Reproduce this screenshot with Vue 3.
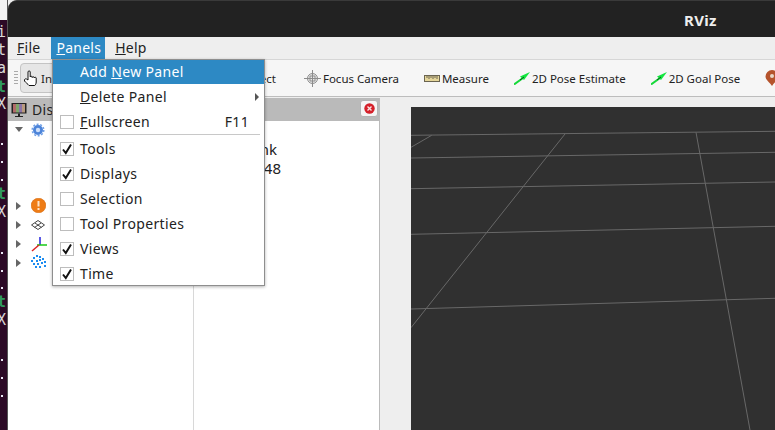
<script setup>
const tools = [
  { label: 'Focus Camera', icon: 'focus' },
  { label: 'Measure', icon: 'ruler' },
  { label: '2D Pose Estimate', icon: 'arrow' },
  { label: '2D Goal Pose', icon: 'arrow' },
  { label: '', icon: 'pin' },
]
const menu = [
  { label: 'Tools', checked: true },
  { label: 'Displays', checked: true },
  { label: 'Selection', checked: false },
  { label: 'Tool Properties', checked: false },
  { label: 'Views', checked: true },
  { label: 'Time', checked: true },
]
const cloud = [[5,0],[8,1],[2,2],[11,3],[0,5],[5,5],[8,4],[2,8],[6,8],[10,7],[13,6],[4,11],[8,11],[13,10]]
const termDots = [143, 161, 179, 252, 270, 287, 359, 377, 395]
const termChars = [
  { c: 'i', y: 24, cl: '#d8d8d8' }, { c: 't', y: 42, cl: '#d8d8d8' }, { c: 'a', y: 60, cl: '#d8d8d8' },
  { c: 't', y: 79, cl: '#2f9a5e', b: true }, { c: 'X', y: 96, cl: '#d8d8d8' }, { c: 't', y: 186, cl: '#2f9a5e', b: true },
  { c: 'X', y: 204, cl: '#d8d8d8' }, { c: 't', y: 294, cl: '#2f9a5e', b: true }, { c: 'X', y: 312, cl: '#d8d8d8' },
]
</script>

<template>
  <div class="screen">
    <div class="term">
      <span v-for="(t, i) in termChars" :key="i" class="tchar" :class="{ bold: t.b }" :style="{ top: t.y + 'px', color: t.cl }">{{ t.c }}</span>
      <i v-for="d in termDots" :key="d" class="tdot" :style="{ top: d + 'px' }"></i>
    </div>
    <div class="window">
      <header class="title">RViz</header>
      <nav class="menubar">
        <span class="mi first"><u>F</u>ile</span>
        <span class="mi active"><u>P</u>anels</span>
        <span class="mi"><u>H</u>elp</span>
      </nav>
      <div class="toolbar">
        <div class="grip"></div>
        <div class="interact">
          <svg width="17" height="16" viewBox="0 0 17 16"><path d="M1.500 10c0-1 1-1.500 2-1L5 10V2c0-1.500 2.200-1.500 2.200 0V7c0-1 2-1 2 0v.5c0-1 2-1 2 0V8c0-1 2-1 2 0v4c0 2-1 3-1.500 3.500H6C5 14 2.500 12.500 1.500 11z" fill="#fff" stroke="#111" stroke-width="1"/></svg>
          <span>Interact</span>
        </div>
        <div class="spacer"></div>
        <span class="tool tail">Select</span>
        <div v-for="t in tools" :key="t.label + t.icon" class="tool">
          <svg v-if="t.icon === 'focus'" width="17" height="17" viewBox="0 0 17 17" fill="none" stroke="#8c8c8c"><circle cx="8.500" cy="8.500" r="5" fill="#e8e8e8"/><path d="M8.500 0v17M0 8.500h17M6 6h5v5H6z"/></svg>
          <svg v-else-if="t.icon === 'ruler'" width="16" height="7" viewBox="0 0 16 7"><rect x=".5" y=".5" width="15" height="6" fill="#e5d69a" stroke="#6a6450"/><path d="M3 1v2M5 1v3M7 1v2M9 1v3M11 1v2M13 1v3" stroke="#6a6450"/></svg>
          <svg v-else-if="t.icon === 'arrow'" width="16" height="13" viewBox="0 0 16 13"><path d="M0 12.500L9 6" stroke="#16d93a" stroke-width="2"/><path d="M6 4.500L16 0l-6 8z" fill="#12e63e"/><path d="M6 8l4-3" stroke="#0a5a1c"/></svg>
          <svg v-else width="14" height="16" viewBox="0 0 14 16"><path d="M7 0a6.500 6.500 0 016.500 6.500C13.500 10 9 12.500 7 16 5 12.500.5 10 .5 6.500A6.500 6.500 0 017 0z" fill="#b5532c"/><circle cx="7" cy="6" r="2" fill="#e8d8c8"/></svg>
          <span v-if="t.label">{{ t.label }}</span>
        </div>
      </div>
      <main class="body">
        <section class="dock displays">
          <div class="dock-head">
            <svg width="16" height="16" viewBox="0 0 16 16"><rect x=".5" y="1" width="15" height="10.500" fill="#222"/><rect x="2" y="2" width="3" height="8.500" fill="#b06a6a"/><rect x="5" y="2" width="3" height="8.500" fill="#7ea66c"/><rect x="8" y="2" width="3" height="8.500" fill="#8a74a6"/><rect x="11" y="2" width="3" height="8.500" fill="#b89a7e"/><path d="M7 11.500h2V14h3v1H4v-1h3z" fill="#222"/></svg>
            <span>Displays</span>
          </div>
          <div class="tree">
            <div class="row"><b class="arr down"></b>
              <svg width="14" height="14" viewBox="0 0 14 14"><circle cx="7" cy="7" r="5" fill="#4d84d9"/><circle cx="7" cy="7" r="5.800" fill="none" stroke="#6f9fe6" stroke-width="1.500" stroke-dasharray="2 1.600"/><circle cx="7" cy="7" r="2.200" fill="#cfe0fa"/></svg>
            </div>
            <div class="gap"></div>
            <div class="row"><b class="arr"></b>
              <svg width="15" height="15" viewBox="0 0 15 15"><circle cx="7.500" cy="7.500" r="7.300" fill="#ee7c16" stroke="#d9690c" stroke-width=".6"/><rect x="6.500" y="3" width="2" height="5.500" fill="#fde3c8"/><rect x="6.500" y="10" width="2" height="2" fill="#fde3c8"/></svg>
            </div>
            <div class="row"><b class="arr"></b>
              <svg width="14" height="10" viewBox="0 0 14 10" fill="none" stroke="#444"><path d="M7 .5l6.500 4.500L7 9.500.5 5zM4 3l6.500 4.500M10 3L3.500 7.500"/></svg>
            </div>
            <div class="row"><b class="arr"></b>
              <svg width="16" height="16" viewBox="0 0 16 16" fill="none" stroke-width="1.500"><path d="M9 1v8" stroke="#2222dd"/><path d="M6 9h10" stroke="#18c818"/><path d="M8 9L1 15" stroke="#dd2222"/></svg>
            </div>
            <div class="row"><b class="arr"></b>
              <svg width="15" height="15" viewBox="0 0 15 15" fill="#1c8cf0"><rect v-for="(c, i) in cloud" :key="i" :x="c[0]" :y="c[1]" width="2" height="2"/></svg>
            </div>
          </div>
          <div class="col-line"></div>
          <div class="val val1">nk</div>
          <div class="val val2">48</div>
          <div class="head-close">
            <svg width="11" height="11" viewBox="0 0 11 11"><circle cx="5.500" cy="5.500" r="5.200" fill="#d5202a"/><path d="M3.500 3.500l4 4M7.500 3.500l-4 4" stroke="#fbe4e4" stroke-width="1.400"/></svg>
          </div>
        </section>
        <section class="view">
          <svg class="grid" width="364" height="323" viewBox="411 107 364 323" fill="none" stroke="#686868">
            <path d="M411 135.300L775 131.300M411 158L775 152.300M411 188.700L775 182M411 234.300L775 226.300M411 309L775 298.300"/>
            <path d="M411 147.300L431.700 135.300M411 327.700L565 134M696 132.300L750 430"/>
          </svg>
        </section>
      </main>
    </div>

    <div class="popup">
      <div class="pi hot"><span class="lbl">Add <u>N</u>ew Panel</span></div>
      <div class="pi"><span class="lbl"><u>D</u>elete Panel</span><em class="sub"></em></div>
      <div class="pi"><span class="box"></span><span class="lbl"><u>F</u>ullscreen</span><span class="key">F11</span></div>
      <div class="sep"></div>
      <div v-for="m in menu" :key="m.label" class="pi">
        <span class="box">
          <svg v-if="m.checked" width="12" height="12" viewBox="0 0 12 12" fill="none" stroke="#111" stroke-width="2"><path d="M2 6.500L4.800 10 10 1.500"/></svg>
        </span>
        <span class="lbl">{{ m.label }}</span>
      </div>
    </div>
  </div>
</template>

<style scoped>
.screen { position: relative; width: 775px; height: 430px; overflow: hidden; background: #f2f2f2; font-family: "Noto Sans", "Open Sans", sans-serif; font-size: 13px; color: #222; }
.term { position: absolute; left: 0; top: 20px; bottom: 0; width: 8px; background: #2c0a26; overflow: hidden; }
.tchar { position: absolute; left: -3px; margin-top: -20px; font: 400 15px/16px "DejaVu Sans Mono", monospace; }
.tchar.bold { font-weight: 700; }
.tdot { position: absolute; left: 1px; margin-top: -20px; width: 2px; height: 2px; background: #e8e8f4; }
.window { position: absolute; left: 7px; top: 0; right: 0; bottom: 0; display: flex; flex-direction: column; background: #eee; border-left: 1px solid #555; }
.title { height: 37px; flex: none; background: #222; color: #eee; font-weight: 700; font-size: 15px; letter-spacing: .3px; line-height: 38px; padding-left: 676px; border-top: 1px solid #3a3a3a; box-sizing: border-box; border-radius: 9px 0 0 0; }
.menubar { height: 22px; flex: none; display: flex; background: #eee; padding-left: 9px; font-size: 14px; letter-spacing: .25px; line-height: 22px; }
.mi { color: #222; }
.mi.first { margin-right: 11px; }
.mi.active { background: #2d89c4; color: #fff; padding: 0 4px 0 5px; margin-right: 10px; }
.toolbar { height: 38px; flex: none; display: flex; align-items: center; background: #f6f6f6; border-top: 1px solid #d6d6d6; border-bottom: 1px solid #bdbdbd; box-sizing: border-box; font-size: 11.5px; }
.grip { width: 4px; height: 16px; flex: none; margin-left: 6px; background: radial-gradient(#aaa 40%, transparent 45%) 0 0 / 2px 3px; }
.interact { display: flex; align-items: center; gap: 1px; flex: none; margin-left: 2px; width: 70px; height: 30px; box-sizing: border-box; border: 1px solid #c4c4c4; border-radius: 4px; background: #e6e6e6; padding-left: 2px; overflow: hidden; white-space: nowrap; }
.spacer { flex: none; width: 154px; }
.tool { display: flex; align-items: center; gap: 2px; flex: none; white-space: nowrap; margin-right: 25px; }
.tool.tail { margin-right: 28px; }
.body { flex: 1; display: flex; min-height: 0; padding-top: 1px; }
.dock { position: relative; width: 372px; flex: none; background: #fff; border-right: 1px solid #bbb; box-sizing: border-box; }
.dock-head { height: 23px; background: #bababa; display: flex; align-items: center; gap: 5px; padding-left: 3px; font-size: 14px; letter-spacing: .35px; }
.tree { margin-top: -1px; }
.row { height: 19px; display: flex; align-items: center; padding-left: 8px; }
.gap { height: 57px; }
.arr { width: 0; height: 0; margin-right: 10px; border-left: 5px solid #666; border-top: 4px solid transparent; border-bottom: 4px solid transparent; }
.arr.down { margin-left: -1px; margin-right: 8px; border-left: 4px solid transparent; border-right: 4px solid transparent; border-top: 5px solid #666; border-bottom: 0; }
.col-line { position: absolute; left: 185px; top: 23px; bottom: 0; width: 1px; background: #d8d8d8; }
.val { position: absolute; font-size: 15px; line-height: 18px; }
.val1 { top: 42px; right: 102px; }
.val2 { top: 61px; right: 98px; }
.head-close { position: absolute; right: 1px; top: 2px; width: 18px; height: 17px; box-sizing: border-box; border: 1px solid #b4b4b4; border-radius: 3px; background: #f5f5f5; display: flex; align-items: center; justify-content: center; }
.view { flex: 1; padding: 9px 0 0 31px; background: #eee; display: flex; }
.grid { background: #303030; flex: none; display: block; }
.popup { position: absolute; left: 52px; top: 59px; width: 213px; height: 227px; box-sizing: border-box; background: #fff; border: 1px solid #8e8e8e; box-shadow: 0 1px 3px rgba(0,0,0,.3); font-size: 14px; letter-spacing: .35px; }
.pi { position: relative; height: 25px; display: flex; align-items: center; padding-left: 27px; color: #222; }
.pi.hot { height: 24px; box-sizing: border-box; padding-bottom: 1px; background: #2d89c4; color: #fff; }
.lbl { white-space: nowrap; }
.box { position: absolute; left: 7px; top: 6px; width: 14px; height: 14px; box-sizing: border-box; border: 1px solid #bdbdbd; background: #fff; display: flex; align-items: center; justify-content: center; }
.key { position: absolute; right: 15px; }
.sub { position: absolute; right: 5px; width: 0; height: 0; border-left: 4px solid #555; border-top: 4px solid transparent; border-bottom: 4px solid transparent; }
.sep { height: 1px; background: #c8c8c8; margin: 0 4px 1px; }
</style>
